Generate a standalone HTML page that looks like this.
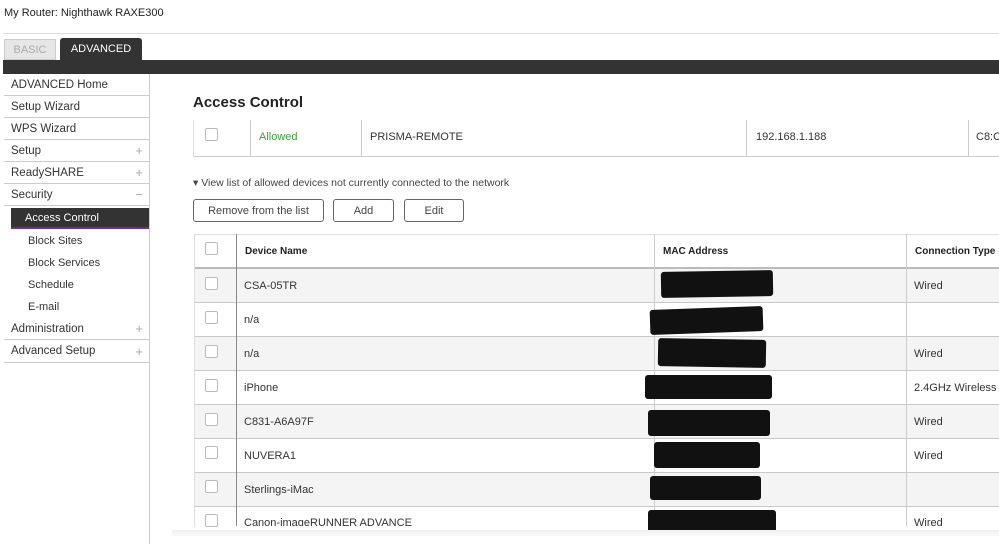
<!DOCTYPE html><html><head><style>
body{margin:0;width:999px;height:544px;overflow:hidden;background:#fff;font-family:"Liberation Sans",sans-serif;color:#333;position:relative}
.a{position:absolute}
.nav div{position:absolute;left:4px;width:145px;font-size:11.5px;color:#333;border-bottom:1px solid #ccc;box-sizing:border-box;padding-left:7px}
.plus{position:absolute;right:6px;color:#aaa;font-size:13px}
.sub{font-size:11px;color:#333;position:absolute;left:28px}
.cb{position:absolute;width:11px;height:11px;border:1px solid #bbb;border-radius:2px;background:#fff}
.row{position:absolute;left:194px;width:805px;height:34px;border-bottom:1px solid #c8c8c8;box-sizing:border-box;font-size:11px}
.row span{position:absolute;top:11px}
.blk{position:absolute;background:#111;border-radius:3px}
.btn{position:absolute;top:199px;height:23px;border:1px solid #666;border-radius:3px;font-size:11px;text-align:center;line-height:23px;color:#444;box-sizing:border-box}
</style></head><body>
<div class="a" style="left:4px;top:7px;font-size:11px;color:#222">My Router: Nighthawk RAXE300</div>
<div class="a" style="left:3px;top:33px;width:996px;height:1px;background:#ddd"></div>
<div class="a" style="left:4px;top:39px;width:52px;height:21px;background:#e6e6e6;border:1px solid #ccc;box-sizing:border-box;font-size:11px;color:#aaa;text-align:center;line-height:21px">BASIC</div>
<div class="a" style="left:60px;top:38px;width:82px;height:22px;background:#333;border-radius:3px 3px 0 0;font-size:11px;color:#fff;text-align:center;line-height:22px">ADVANCED</div>
<div class="a" style="left:3px;top:60px;width:996px;height:14px;background:#333"></div>
<div class="a" style="left:149px;top:74px;width:1px;height:470px;background:#ccc"></div>
<div class="nav">
<div style="top:74px;height:22px;line-height:22px">ADVANCED Home</div>
<div style="top:96px;height:22px;line-height:22px">Setup Wizard</div>
<div style="top:118px;height:22px;line-height:22px">WPS Wizard</div>
<div style="top:140px;height:22px;line-height:22px">Setup<span class="plus">+</span></div>
<div style="top:162px;height:22px;line-height:22px">ReadySHARE<span class="plus">+</span></div>
<div style="top:184px;height:22px;line-height:22px">Security<span class="plus">−</span></div>
<div style="top:318px;height:22px;line-height:22px">Administration<span class="plus">+</span></div>
<div style="top:340px;height:23px;line-height:23px">Advanced Setup<span class="plus">+</span></div>
</div>
<div class="a" style="left:11px;top:208px;width:138px;height:21px;background:#333;border-bottom:2px solid #7a2a8a;color:#fff;font-size:11px;line-height:21px;padding-left:14px;box-sizing:border-box">Access Control</div>
<div class="sub" style="top:235px">Block Sites</div>
<div class="sub" style="top:257px">Block Services</div>
<div class="sub" style="top:279px">Schedule</div>
<div class="sub" style="top:301px">E-mail</div>
<div class="a" style="left:193px;top:94px;font-size:15px;font-weight:bold;color:#222">Access Control</div>
<div class="a" style="left:193px;top:120px;width:806px;height:36px;border-left:1px solid #ddd;border-bottom:1px solid #ccc"></div>
<div class="cb" style="left:205px;top:128px"></div>
<div class="a" style="left:250px;top:120px;width:1px;height:36px;background:#ccc"></div>
<div class="a" style="left:361px;top:120px;width:1px;height:36px;background:#ccc"></div>
<div class="a" style="left:746px;top:120px;width:1px;height:36px;background:#ccc"></div>
<div class="a" style="left:968px;top:120px;width:1px;height:36px;background:#ccc"></div>
<div class="a" style="left:259px;top:131px;font-size:11px;color:#3a9a3a">Allowed</div>
<div class="a" style="left:370px;top:131px;font-size:11px">PRISMA-REMOTE</div>
<div class="a" style="left:756px;top:131px;font-size:11px">192.168.1.188</div>
<div class="a" style="left:976px;top:131px;font-size:11px">C8:C</div>
<div class="a" style="left:193px;top:177px;font-size:10.5px;color:#444">▾ View list of allowed devices not currently connected to the network</div>
<div class="btn" style="left:193px;width:131px">Remove from the list</div>
<div class="btn" style="left:333px;width:61px">Add</div>
<div class="btn" style="left:404px;width:60px">Edit</div>
<div class="a" style="left:194px;top:234px;width:805px;height:292px;overflow:hidden;border-left:1px solid #ddd;border-top:1px solid #ddd">
</div>
<div class="row" style="top:234px;height:35px;border-bottom:2px solid #bbb;border-left:1px solid #ddd;font-weight:bold;font-size:10px;color:#222"><span style="left:50px;top:12px">Device Name</span><span style="left:468px;top:12px">MAC Address</span><span style="left:720px;top:12px">Connection Type</span></div>
<div class="row" style="top:269px;background:#f4f4f4"><span style="left:50px">CSA-05TR</span><span style="left:720px">Wired</span></div>
<div class="row" style="top:303px"><span style="left:50px">n/a</span></div>
<div class="row" style="top:337px;background:#f4f4f4"><span style="left:50px">n/a</span><span style="left:720px">Wired</span></div>
<div class="row" style="top:371px"><span style="left:50px">iPhone</span><span style="left:720px">2.4GHz Wireless</span></div>
<div class="row" style="top:405px;background:#f4f4f4"><span style="left:50px">C831-A6A97F</span><span style="left:720px">Wired</span></div>
<div class="row" style="top:439px"><span style="left:50px">NUVERA1</span><span style="left:720px">Wired</span></div>
<div class="row" style="top:473px;background:#f4f4f4"><span style="left:50px">Sterlings-iMac</span></div>
<div class="row" style="top:507px;height:19px;border:none;overflow:hidden"><span style="left:50px;top:10px">Canon-imageRUNNER ADVANCE</span><span style="left:720px;top:10px">Wired</span></div>
<div class="a" style="left:194px;top:234px;width:1px;height:292px;background:#ddd"></div>
<div class="a" style="left:236px;top:234px;width:1px;height:292px;background:#888"></div>
<div class="a" style="left:654px;top:234px;width:1px;height:292px;background:#ccc"></div>
<div class="a" style="left:906px;top:234px;width:1px;height:292px;background:#ccc"></div>
<div class="cb" style="left:205px;top:242px"></div>
<div class="cb" style="left:205px;top:277px"></div><div class="cb" style="left:205px;top:311px"></div><div class="cb" style="left:205px;top:345px"></div><div class="cb" style="left:205px;top:379px"></div><div class="cb" style="left:205px;top:413px"></div><div class="cb" style="left:205px;top:446px"></div><div class="cb" style="left:205px;top:480px"></div><div class="cb" style="left:205px;top:514px"></div>
<div class="blk" style="left:661px;top:271px;width:112px;height:26px;transform:rotate(-1deg)"></div>
<div class="blk" style="left:650px;top:308px;width:113px;height:25px;transform:rotate(-2deg)"></div>
<div class="blk" style="left:658px;top:339px;width:108px;height:28px;transform:rotate(1deg)"></div>
<div class="blk" style="left:645px;top:375px;width:127px;height:24px"></div>
<div class="blk" style="left:648px;top:410px;width:122px;height:26px"></div>
<div class="blk" style="left:654px;top:442px;width:106px;height:26px"></div>
<div class="blk" style="left:650px;top:476px;width:111px;height:24px"></div>
<div class="blk" style="left:648px;top:510px;width:128px;height:26px"></div>
<div class="a" style="left:172px;top:530px;width:827px;height:6px;background:linear-gradient(#f0f0f0,#fafafa)"></div>
</body></html>
